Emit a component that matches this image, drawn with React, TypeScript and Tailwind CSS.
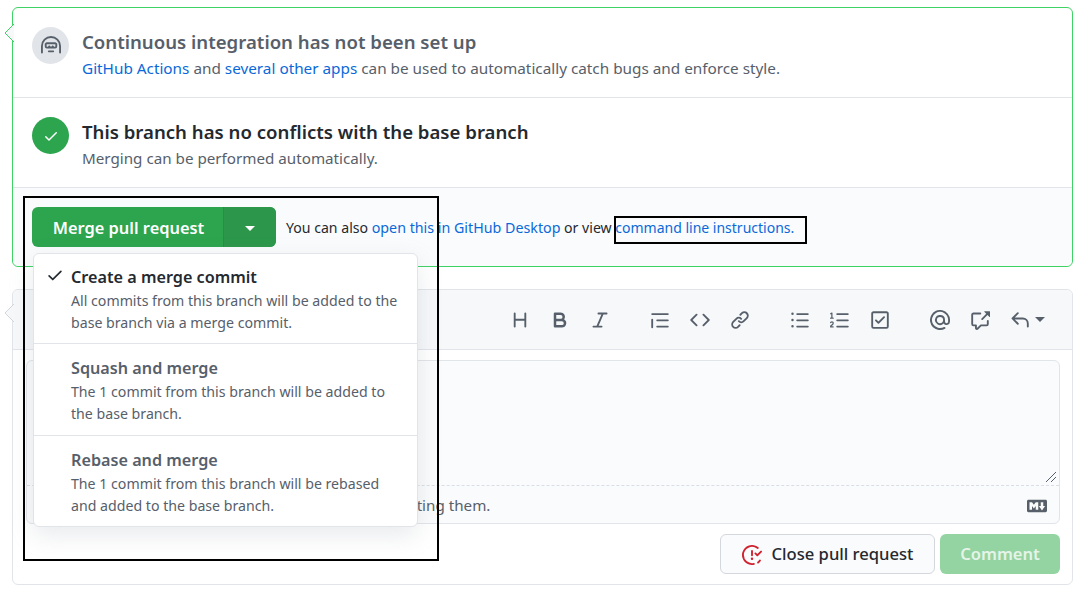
import * as React from 'react';

const paths: { [name: string]: string } = {
    heading: 'M3.75 2a.75.75 0 0 1 .75.75V7h7V2.75a.75.75 0 0 1 1.5 0v10.5a.75.75 0 0 1-1.5 0V8.5h-7v4.75a.75.75 0 0 1-1.5 0V2.75A.75.75 0 0 1 3.75 2Z',
    bold: 'M4 2h4.5a3.501 3.501 0 0 1 2.852 5.53A3.499 3.499 0 0 1 9.5 14H4a1 1 0 0 1-1-1V3a1 1 0 0 1 1-1Zm1 7v3h4.5a1.5 1.5 0 0 0 0-3Zm3.5-2a1.5 1.5 0 0 0 0-3H5v3Z',
    italic: 'M6 2.75A.75.75 0 0 1 6.75 2h6.5a.75.75 0 0 1 0 1.5h-2.505l-3.858 9H9.25a.75.75 0 0 1 0 1.5h-6.5a.75.75 0 0 1 0-1.5h2.505l3.858-9H6.75A.75.75 0 0 1 6 2.75Z',
    quote: 'M1.75 2.5h12.5a.75.75 0 0 1 0 1.5H1.75a.75.75 0 0 1 0-1.5Zm4 5h8.5a.75.75 0 0 1 0 1.5h-8.5a.75.75 0 0 1 0-1.5Zm0 5h8.5a.75.75 0 0 1 0 1.5h-8.5a.75.75 0 0 1 0-1.5ZM2.5 7.75v6a.75.75 0 0 1-1.5 0v-6a.75.75 0 0 1 1.5 0Z',
    code: 'm11.28 3.22 4.25 4.25a.75.75 0 0 1 0 1.06l-4.25 4.25a.749.749 0 0 1-1.275-.326.749.749 0 0 1 .215-.734L13.94 8l-3.72-3.72a.749.749 0 0 1 .326-1.275.749.749 0 0 1 .734.215Zm-6.56 0a.751.751 0 0 1 1.042.018.751.751 0 0 1 .018 1.042L2.06 8l3.72 3.72a.749.749 0 0 1-.326 1.275.749.749 0 0 1-.734-.215L.47 8.53a.75.75 0 0 1 0-1.06Z',
    link: 'm7.775 3.275 1.25-1.25a3.5 3.5 0 1 1 4.95 4.95l-2.5 2.5a3.5 3.5 0 0 1-4.95 0 .751.751 0 0 1 .018-1.042.751.751 0 0 1 1.042-.018 1.998 1.998 0 0 0 2.83 0l2.5-2.5a2.002 2.002 0 0 0-2.83-2.83l-1.25 1.25a.751.751 0 0 1-1.042-.018.751.751 0 0 1-.018-1.042Zm-4.69 9.64a1.998 1.998 0 0 0 2.83 0l1.25-1.25a.751.751 0 0 1 1.042.018.751.751 0 0 1 .018 1.042l-1.25 1.25a3.5 3.5 0 1 1-4.95-4.95l2.5-2.5a3.5 3.5 0 0 1 4.95 0 .751.751 0 0 1-.018 1.042.751.751 0 0 1-1.042.018 1.998 1.998 0 0 0-2.83 0l-2.5 2.5a1.998 1.998 0 0 0 0 2.83Z',
    listUnordered: 'M5.75 2.5h8.5a.75.75 0 0 1 0 1.5h-8.5a.75.75 0 0 1 0-1.5Zm0 5h8.5a.75.75 0 0 1 0 1.5h-8.5a.75.75 0 0 1 0-1.5Zm0 5h8.5a.75.75 0 0 1 0 1.5h-8.5a.75.75 0 0 1 0-1.5ZM2 14a1 1 0 1 1 0-2 1 1 0 0 1 0 2Zm1-6a1 1 0 1 1-2 0 1 1 0 0 1 2 0ZM2 4a1 1 0 1 1 0-2 1 1 0 0 1 0 2Z',
    listOrdered: 'M5 3.25a.75.75 0 0 1 .75-.75h8.5a.75.75 0 0 1 0 1.5h-8.5A.75.75 0 0 1 5 3.25Zm0 5a.75.75 0 0 1 .75-.75h8.5a.75.75 0 0 1 0 1.5h-8.5A.75.75 0 0 1 5 8.25Zm0 5a.75.75 0 0 1 .75-.75h8.5a.75.75 0 0 1 0 1.5h-8.5a.75.75 0 0 1-.75-.75ZM.924 10.32a.5.5 0 0 1-.851-.525l.001-.001.001-.002.002-.004.007-.011c.097-.144.215-.273.348-.384.228-.19.588-.392 1.068-.392.468 0 .858.181 1.126.484.259.294.377.673.377 1.038 0 .987-.686 1.495-1.156 1.845l-.047.035c-.303.225-.522.4-.654.597h1.357a.5.5 0 0 1 0 1H.5a.5.5 0 0 1-.5-.5c0-1.005.692-1.52 1.167-1.875l.035-.025c.531-.396.8-.625.8-1.078a.57.57 0 0 0-.128-.376C1.806 10.068 1.695 10 1.5 10a.658.658 0 0 0-.429.163.835.835 0 0 0-.144.153ZM2.003 2.5V6h.503a.5.5 0 0 1 0 1H.5a.5.5 0 0 1 0-1h.503V3.308l-.28.14a.5.5 0 0 1-.446-.895l1.003-.5a.5.5 0 0 1 .723.447Z',
    checkbox: 'M2.75 1h10.5c.966 0 1.75.784 1.75 1.75v10.5A1.75 1.75 0 0 1 13.25 15H2.75A1.75 1.75 0 0 1 1 13.25V2.75C1 1.784 1.784 1 2.75 1ZM2.5 2.75v10.5c0 .138.112.25.25.25h10.5a.25.25 0 0 0 .25-.25V2.75a.25.25 0 0 0-.25-.25H2.75a.25.25 0 0 0-.25.25Zm9.28 3.53-4.5 4.5a.75.75 0 0 1-1.06 0l-2-2a.751.751 0 0 1 .018-1.042.751.751 0 0 1 1.042-.018l1.47 1.47 3.97-3.97a.751.751 0 0 1 1.042.018.751.751 0 0 1 .018 1.042Z',
    mention: 'M4.75 2.37a6.501 6.501 0 0 0 6.5 11.26.75.75 0 0 1 .75 1.298A7.999 7.999 0 0 1 .989 4.148 8 8 0 0 1 16 7.75v1.5a2.75 2.75 0 0 1-5.072 1.475 3.999 3.999 0 0 1-6.65-4.19A4 4 0 0 1 12 8v1.25a1.25 1.25 0 0 0 2.5 0V7.867a6.5 6.5 0 0 0-9.75-5.496ZM10.5 8a2.5 2.5 0 1 0-5 0 2.5 2.5 0 0 0 5 0Z',
    crossReference: 'M2.75 3.5a.25.25 0 0 0-.25.25v7.5c0 .138.112.25.25.25h2a.75.75 0 0 1 .75.75v2.19l2.72-2.72a.749.749 0 0 1 .53-.22h4.5a.25.25 0 0 0 .25-.25v-2.5a.75.75 0 0 1 1.5 0v2.5A1.75 1.75 0 0 1 13.25 13H9.06l-2.573 2.573A1.458 1.458 0 0 1 4 14.543V13H2.75A1.75 1.75 0 0 1 1 11.25v-7.5C1 2.784 1.784 2 2.75 2h5.5a.75.75 0 0 1 0 1.5ZM16 1.25v4.146a.25.25 0 0 1-.427.177L14.03 4.03l-3.75 3.75a.749.749 0 0 1-1.275-.326.749.749 0 0 1 .215-.734l3.75-3.75-1.543-1.543A.25.25 0 0 1 11.604 1h4.146a.25.25 0 0 1 .25.25Z',
    reply: 'M6.78 1.97a.75.75 0 0 1 0 1.06L3.81 6h6.44A4.75 4.75 0 0 1 15 10.75v2.5a.75.75 0 0 1-1.5 0v-2.5a3.25 3.25 0 0 0-3.25-3.25H3.81l2.97 2.97a.749.749 0 0 1-.326 1.275.749.749 0 0 1-.734-.215L1.47 7.28a.75.75 0 0 1 0-1.06l4.25-4.25a.75.75 0 0 1 1.06 0Z',
    markdown: 'M14.85 3c.63 0 1.15.52 1.14 1.15v7.7c0 .63-.51 1.15-1.15 1.15H1.15C.52 13 0 12.48 0 11.85v-7.7C0 3.52.52 3 1.15 3ZM9 11V5H7L5.5 7 4 5H2v6h2V8l1.5 1.92L7 8v3Zm2.99.5L14.5 8H13V5h-2v3H9.5Z',
    check: 'M13.78 4.22a.75.75 0 0 1 0 1.06l-7.25 7.25a.75.75 0 0 1-1.06 0L2.22 9.28a.751.751 0 0 1 .018-1.042.751.751 0 0 1 1.042-.018L6 10.94l6.72-6.72a.75.75 0 0 1 1.06 0Z',
    hubot: 'M0 8a8 8 0 1 1 16 0v5.25a.75.75 0 0 1-1.5 0V8a6.5 6.5 0 1 0-13 0v5.25a.75.75 0 0 1-1.5 0V8Zm5.5 4.25a.75.75 0 0 1 .75-.75h3.5a.75.75 0 0 1 0 1.5h-3.5a.75.75 0 0 1-.75-.75ZM3 6.75C3 5.784 3.784 5 4.75 5h6.5c.966 0 1.75.784 1.75 1.75v1.5A1.75 1.75 0 0 1 11.25 10h-6.5A1.75 1.75 0 0 1 3 8.25v-1.5Zm1.75-.25a.25.25 0 0 0-.25.25v1.5c0 .138.112.25.25.25h.7L6.5 7.4l1.5 1.1 1.5-1.1 1.05 1.1h.7a.25.25 0 0 0 .25-.25v-1.5a.25.25 0 0 0-.25-.25h-6.5Z',
    issueClosed: 'M1.5 8a6.5 6.5 0 0 1 10.65-5.003.75.75 0 0 0 .959-1.153A8 8 0 1 0 9.646 15.83a.75.75 0 1 0-.292-1.472A6.5 6.5 0 0 1 1.5 8ZM8 4a.75.75 0 0 1 .75.75v3.5a.75.75 0 0 1-1.5 0v-3.5A.75.75 0 0 1 8 4Zm0 8a1 1 0 1 0 0-2 1 1 0 0 0 0 2Zm7.78-7.28a.75.75 0 0 1 0 1.06l-3 3a.75.75 0 0 1-1.06 0l-1.5-1.5a.75.75 0 1 1 1.06-1.06l.97.97 2.47-2.47a.75.75 0 0 1 1.06 0Zm-1.02 7.1a.75.75 0 0 1 .2 1.04 8 8 0 0 1-1.6 1.75.75.75 0 1 1-.95-1.16 6.5 6.5 0 0 0 1.3-1.43.75.75 0 0 1 1.05-.2Z',
};

const Octicon = ({ name, className }: { name: string; className: string }) => (
    <svg viewBox="0 0 16 16" fill="currentColor" className={className}>
        <path fillRule="evenodd" d={paths[name]} />
    </svg>
);

const Caret = ({ className }: { className: string }) => (
    <span className={'inline-block w-0 h-0 border-x-[5px] border-x-transparent border-t-[5px] ' + className} />
);

// little speech bubble arrow on the left side of a box
const BoxArrow = ({ stroke, top }: { stroke: string; top: string }) => (
    <svg viewBox="0 0 10 20" fill="#f6f8fa" stroke={stroke} className={'absolute left-[-9px] w-[10px] h-[20px] ' + top}>
        <path d="M10 1 L1 10 L10 19" />
    </svg>
);

const toolGroups = [
    ['heading', 'bold', 'italic'],
    ['quote', 'code', 'link'],
    ['listUnordered', 'listOrdered', 'checkbox'],
];

const mergeOptions = [
    {
        title: 'Create a merge commit',
        lines: ['All commits from this branch will be added to the', 'base branch via a merge commit.'],
        selected: true,
        rowClass: 'h-[90px] pt-[11px] border-b border-[#e1e4e8]',
    },
    {
        title: 'Squash and merge',
        lines: ['The 1 commit from this branch will be added to', 'the base branch.'],
        selected: false,
        rowClass: 'h-[92px] pt-[12px] border-b border-[#e1e4e8]',
    },
    {
        title: 'Rebase and merge',
        lines: ['The 1 commit from this branch will be rebased', 'and added to the base branch.'],
        selected: false,
        rowClass: 'h-[90px] pt-[12px]',
    },
];

const App = () => {
    return (
        <div className="relative h-[592px] w-[1079px] overflow-hidden bg-white pl-3 pt-[7px] font-['Noto_Sans',sans-serif] text-[14px] text-[#24292f]">
            <div className="relative w-[1061px] h-[260px] rounded-[6px] border border-[#3fd265] bg-white">
                <BoxArrow stroke="#3fd265" top="top-[15px]" />
                <div className="flex h-[90px] items-start gap-[13px] border-b border-[#e1e4e8] pl-[19px] pt-[19px]">
                    <div className="flex h-[37px] w-[37px] items-center justify-center rounded-full bg-[#e1e4e8]">
                        <Octicon name="hubot" className="h-[20px] w-[20px] text-[#57606a]" />
                    </div>
                    <div className="mt-[1px]">
                        <div className="text-[18.6px] font-semibold leading-[28px] text-[#57606a]">Continuous integration has not been set up</div>
                        <div className="text-[15.3px] leading-[25px] text-[#57606a]">
                            <span className="text-[#0969da]">GitHub Actions</span> and <span className="text-[#0969da]">several other apps</span> can be used to automatically catch bugs and enforce style.
                        </div>
                    </div>
                </div>
                <div className="flex h-[90px] items-start gap-[13px] border-b border-[#e1e4e8] pl-[19px] pt-[19px]">
                    <div className="flex h-[37px] w-[37px] items-center justify-center rounded-full bg-[#2da44e]">
                        <Octicon name="check" className="h-[16px] w-[16px] text-white" />
                    </div>
                    <div className="mt-[1px]">
                        <div className="text-[18.6px] font-semibold leading-[28px] text-[#24292f]">This branch has no conflicts with the base branch</div>
                        <div className="text-[15.2px] leading-[25px] text-[#57606a]">Merging can be performed automatically.</div>
                    </div>
                </div>
                <div className="flex h-[78px] items-start rounded-b-[6px] bg-[#fafbfc] pl-[19px] pt-[19px]">
                    <div className="flex h-[40px] w-[244px] rounded-[6px] bg-[#2da44e] text-white">
                        <div className="flex w-[191px] items-center justify-center pl-[2px] pt-[2px] text-[16.4px] font-semibold">Merge pull request</div>
                        <div className="flex flex-1 items-center justify-center rounded-r-[6px] border-l border-[#2a8c46] bg-[#2c974b] pt-[2px]">
                            <Caret className="border-t-white" />
                        </div>
                    </div>
                    <div className="ml-[10px] pt-[10px] text-[14.1px] leading-[22px]">
                        You can also <span className="text-[14.25px] text-[#0969da]">open this in GitHub Desktop</span> or view <span className="text-[14px] text-[#0969da]">command line instructions.</span>
                    </div>
                </div>
            </div>

            <div className="relative mt-[22px] w-[1061px] h-[296px] rounded-[6px] border border-[#e1e4e8] bg-white">
                <BoxArrow stroke="#d0d7de" top="top-[13px]" />
                <div className="flex h-[60px] items-center justify-end rounded-t-[6px] border-b border-[#e1e4e8] bg-[#f6f8fa] pr-[22px]">
                    <div className="flex items-center gap-[20px] text-[#57606a]">
                        {toolGroups.map((group, i) => (
                            <div key={i} className="flex">
                                {group.map((name) => (
                                    <div key={name} className="flex w-[40px] justify-center">
                                        <Octicon name={name} className="h-[20px] w-[20px]" />
                                    </div>
                                ))}
                            </div>
                        ))}
                        <div className="flex">
                            <div className="flex w-[40px] justify-center">
                                <Octicon name="mention" className="h-[20px] w-[20px]" />
                            </div>
                            <div className="flex w-[40px] justify-center">
                                <Octicon name="crossReference" className="h-[20px] w-[20px]" />
                            </div>
                            <div className="flex w-[50px] items-center gap-[5px] pl-[10px]">
                                <Octicon name="reply" className="h-[20px] w-[20px] shrink-0" />
                                <Caret className="border-t-[#57606a]" />
                            </div>
                        </div>
                    </div>
                </div>
                <div className="ml-[13px] mt-[10px] h-[164px] w-[1034px] rounded-[6px] border border-[#e1e4e8] bg-[#fafbfc]">
                    <div className="relative h-[125px] border-b border-dashed border-[#d8dee4]">
                        <svg viewBox="0 0 12 12" className="absolute right-[2px] bottom-[2px] h-[12px] w-[12px] text-[#57606a]" stroke="currentColor" fill="none">
                            <path d="M1 11 L11 1 M6 11 L11 6" />
                        </svg>
                    </div>
                    <div className="flex h-[37px] items-center justify-between pl-[16px] pr-[12px] pt-[2px] text-[15.2px] text-[#57606a]">
                        <span>Attach files by dragging &amp; dropping, selecting or pasting them.</span>
                        <Octicon name="markdown" className="h-[20px] w-[20px] text-[#57606a]" />
                    </div>
                </div>
                <div className="mt-[10px] flex justify-end gap-[5px] pr-[12px]">
                    <div className="flex h-[40px] w-[215px] items-center justify-center gap-[10px] rounded-[6px] border border-[#d4d7db] bg-[#fafbfc] pt-[1px] text-[16.6px] font-medium text-[#24292f]">
                        <Octicon name="issueClosed" className="h-[20px] w-[20px] text-[#cf222e]" />
                        Close pull request
                    </div>
                    <div className="flex h-[40px] w-[120px] items-center justify-center rounded-[6px] bg-[#94d3a2] pt-[1px] text-[16.6px] font-semibold text-[#e4f4e7]">
                        Comment
                    </div>
                </div>
            </div>

            {/* merge method menu, lies over the boxes */}
            <div className="absolute left-[33px] top-[253px] w-[385px] rounded-[6px] border border-[#e1e4e8] bg-white shadow-[0_8px_24px_rgba(140,149,159,0.2)]">
                {mergeOptions.map((option) => (
                    <div key={option.title} className={'relative pl-[37px] ' + option.rowClass}>
                        {option.selected && <Octicon name="check" className="absolute left-[12px] top-[12px] h-[18px] w-[18px] text-[#24292f]" />}
                        <div className={'pb-[1px] text-[16.2px] font-semibold leading-[24px] ' + (option.selected ? 'text-[#24292f]' : 'text-[#57606a]')}>{option.title}</div>
                        {option.lines.map((line) => (
                            <div key={line} className="text-[14.17px] leading-[22px] text-[#57606a]">{line}</div>
                        ))}
                    </div>
                ))}
            </div>

            {/* hand drawn annotation rectangles on the screenshot */}
            <div className="absolute left-[23px] top-[196px] h-[365px] w-[416px] border-2 border-black" />
            <div className="absolute left-[614px] top-[216px] h-[28px] w-[193px] border-2 border-black" />
        </div>
    );
};

export default App;
